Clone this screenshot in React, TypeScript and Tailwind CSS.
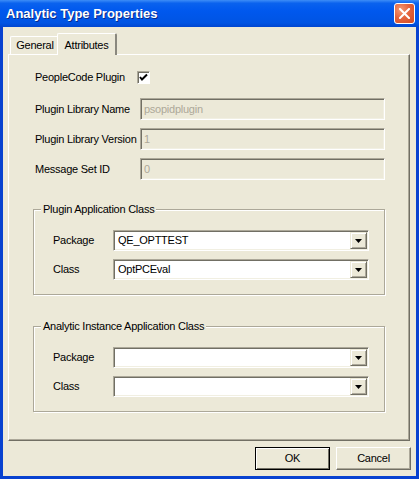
import React from "react";

function DropBtn() {
  return (
    <div className="w-[17px] h-[17px] flex items-center justify-center bg-[#ECE9D8] border-t border-l border-t-[#ECE9D8] border-l-[#ECE9D8] border-b border-r border-b-[#716F64] border-r-[#716F64] shadow-[inset_1px_1px_0_#ffffff,inset_-1px_-1px_0_#ACA899]">
      <svg width="7" height="4" viewBox="0 0 7 4">
        <path d="M0 0H7L3.5 4Z" fill="#000" />
      </svg>
    </div>
  );
}

function Select({ value }: { value: string }) {
  return (
    <div className="w-[256px] h-[21px] flex items-center bg-white border-t border-l border-t-[#ACA899] border-l-[#ACA899] border-b border-r border-b-white border-r-white shadow-[inset_1px_1px_0_#716F64,inset_-1px_-1px_0_#F1EFE2] pl-[2px] pr-[1px]">
      <span className="flex-1 pl-[2px] leading-[13px] whitespace-nowrap">{value}</span>
      <DropBtn />
    </div>
  );
}

function Group({ title, pkg, cls }: { title: string; pkg: string; cls: string }) {
  return (
    <div className="ml-[24px] w-[352px] h-[86px] flex flex-col border border-[#ACA899] shadow-[1px_1px_0_#ffffff,inset_1px_1px_0_#ffffff]">
      <span className="self-start -mt-[7px] ml-[7px] px-[2px] bg-[#ECE9D8] leading-[13px] whitespace-nowrap">{title}</span>
      <div className="flex items-center mt-[14px] pl-[19px] h-[21px]">
        <span className="w-[60px] whitespace-nowrap">Package</span>
        <Select value={pkg} />
      </div>
      <div className="flex items-center mt-[8px] pl-[19px] h-[21px]">
        <span className="w-[60px] whitespace-nowrap">Class</span>
        <Select value={cls} />
      </div>
    </div>
  );
}

function TextRow({ label, value }: { label: string; value: string }) {
  return (
    <div className="flex items-center h-[22px] mt-[8px]">
      <span className="w-[105px] shrink-0 whitespace-nowrap">{label}</span>
      <div className="w-[245px] h-[22px] flex items-center bg-[#ECE9D8] border-t border-l border-t-[#ACA899] border-l-[#ACA899] border-b border-r border-b-white border-r-white shadow-[inset_1px_1px_0_#716F64,inset_-1px_-1px_0_#F1EFE2] pl-[3px] text-[#ACA899]">
        {value}
      </div>
    </div>
  );
}

export default function App() {
  return (
    <div className="w-[419px] h-[479px] flex flex-col overflow-hidden text-[11px] tracking-[-0.25px] text-black font-['Liberation_Sans',Arial,sans-serif]">
      {/* Title bar */}
      <div className="h-[27px] shrink-0 flex items-center justify-between pl-[6px] pr-[4px] bg-[linear-gradient(to_bottom,#3D8DF7_0%,#0A62EE_12%,#0058EE_40%,#0054E3_85%,#0046D0_100%)]">
        <span className="text-white font-bold text-[13px] tracking-[0px] [text-shadow:1px_1px_0_#0A2A8A]">
          Analytic Type Properties
        </span>
        <div className="w-[21px] h-[21px] -mt-[1px] rounded-[3px] border border-white bg-[radial-gradient(circle_at_30%_30%,#F49A76_0%,#E4643E_45%,#D04A22_100%)] flex items-center justify-center">
          <svg width="11" height="11" viewBox="0 0 11 11">
            <path d="M1 1L10 10M10 1L1 10" stroke="#fff" strokeWidth="2" strokeLinecap="square" />
          </svg>
        </div>
      </div>

      {/* Body */}
      <div className="flex-1 flex flex-col bg-[#ECE9D8] border-l-[3px] border-r-[3px] border-b-[3px] border-[#0842D0] pt-[6px] pl-[5px] pr-[5px]">
        {/* Tabs */}
        <div className="h-[21px] flex items-end relative z-10">
          <div className="ml-[2px] w-[47px] h-[18px] border-t border-l border-white rounded-tl-[2px] flex items-center justify-center pl-[2px]">
            General
          </div>
          <div className="w-[60px] h-[22px] -mb-px bg-[#ECE9D8] border-t border-l border-white border-r-2 border-r-[#8A887E] rounded-t-[2px] flex items-start justify-center pt-[3px]">
            Attributes
          </div>
        </div>

        {/* Panel */}
        <div className="w-[402px] h-[387px] shrink-0 flex flex-col border-t border-l border-white border-r border-b border-r-[#716F64] border-b-[#716F64] shadow-[inset_-1px_-1px_0_#ACA899] pt-[11px] pl-[26px]">
          <div className="flex items-center h-[22px]">
            <span className="w-[102px] shrink-0 whitespace-nowrap">PeopleCode Plugin</span>
            <div className="w-[13px] h-[13px] bg-white border-t border-l border-t-[#ACA899] border-l-[#ACA899] border-b border-r border-b-white border-r-white shadow-[inset_1px_1px_0_#716F64] flex items-center justify-center">
              <svg width="9" height="9" viewBox="0 0 9 9">
                <path d="M1 4L3 6.5L8 1.5" stroke="#000" strokeWidth="2" fill="none" />
              </svg>
            </div>
          </div>
          <div className="mt-[2px]">
            <TextRow label="Plugin Library Name" value="psopidplugin" />
            <TextRow label="Plugin Library Version" value="1" />
            <TextRow label="Message Set ID" value="0" />
          </div>

          <div className="-ml-[26px] mt-[29px] flex flex-col">
            <Group title="Plugin Application Class" pkg="QE_OPTTEST" cls="OptPCEval" />
            <div className="mt-[31px]">
              <Group title="Analytic Instance Application Class" pkg="" cls="" />
            </div>
          </div>
        </div>

        {/* Buttons */}
        <div className="mt-[6px] flex justify-end gap-[6px]">
          <div className="w-[75px] h-[23px] border border-black shadow-[inset_1px_1px_0_#ffffff,inset_-1px_-1px_0_#716F64] flex items-center justify-center">
            OK
          </div>
          <div className="w-[75px] h-[23px] border-t border-l border-white border-b border-r border-b-[#716F64] border-r-[#716F64] shadow-[inset_-1px_-1px_0_#ACA899] flex items-center justify-center">
            Cancel
          </div>
        </div>
      </div>
    </div>
  );
}
